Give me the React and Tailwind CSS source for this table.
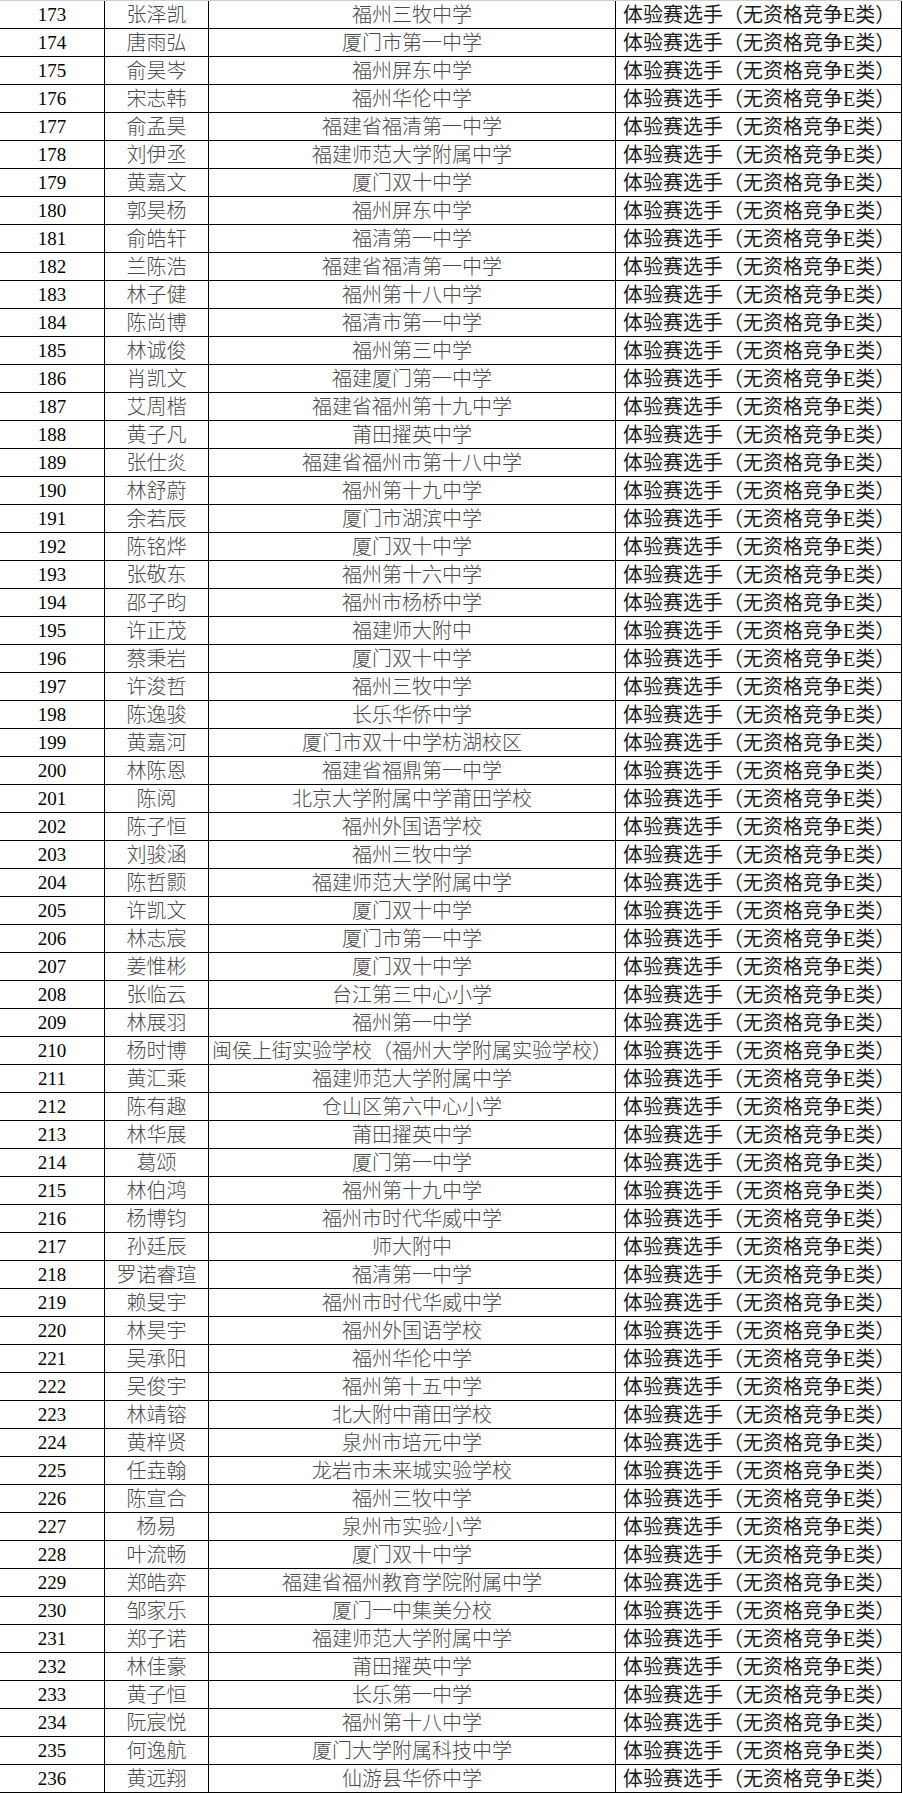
const ROWS = [
  [173, "张泽凯", "福州三牧中学"],
  [174, "唐雨弘", "厦门市第一中学"],
  [175, "俞昊岑", "福州屏东中学"],
  [176, "宋志韩", "福州华伦中学"],
  [177, "俞孟昊", "福建省福清第一中学"],
  [178, "刘伊丞", "福建师范大学附属中学"],
  [179, "黄嘉文", "厦门双十中学"],
  [180, "郭昊杨", "福州屏东中学"],
  [181, "俞皓轩", "福清第一中学"],
  [182, "兰陈浩", "福建省福清第一中学"],
  [183, "林子健", "福州第十八中学"],
  [184, "陈尚博", "福清市第一中学"],
  [185, "林诚俊", "福州第三中学"],
  [186, "肖凯文", "福建厦门第一中学"],
  [187, "艾周楷", "福建省福州第十九中学"],
  [188, "黄子凡", "莆田擢英中学"],
  [189, "张仕炎", "福建省福州市第十八中学"],
  [190, "林舒蔚", "福州第十九中学"],
  [191, "余若辰", "厦门市湖滨中学"],
  [192, "陈铭烨", "厦门双十中学"],
  [193, "张敬东", "福州第十六中学"],
  [194, "邵子昀", "福州市杨桥中学"],
  [195, "许正茂", "福建师大附中"],
  [196, "蔡秉岩", "厦门双十中学"],
  [197, "许浚哲", "福州三牧中学"],
  [198, "陈逸骏", "长乐华侨中学"],
  [199, "黄嘉河", "厦门市双十中学枋湖校区"],
  [200, "林陈恩", "福建省福鼎第一中学"],
  [201, "陈阅", "北京大学附属中学莆田学校"],
  [202, "陈子恒", "福州外国语学校"],
  [203, "刘骏涵", "福州三牧中学"],
  [204, "陈哲颢", "福建师范大学附属中学"],
  [205, "许凯文", "厦门双十中学"],
  [206, "林志宸", "厦门市第一中学"],
  [207, "姜惟彬", "厦门双十中学"],
  [208, "张临云", "台江第三中心小学"],
  [209, "林展羽", "福州第一中学"],
  [210, "杨时博", "闽侯上街实验学校（福州大学附属实验学校）"],
  [211, "黄汇乘", "福建师范大学附属中学"],
  [212, "陈有趣", "仓山区第六中心小学"],
  [213, "林华展", "莆田擢英中学"],
  [214, "葛颂", "厦门第一中学"],
  [215, "林伯鸿", "福州第十九中学"],
  [216, "杨博钧", "福州市时代华威中学"],
  [217, "孙廷辰", "师大附中"],
  [218, "罗诺睿瑄", "福清第一中学"],
  [219, "赖旻宇", "福州市时代华威中学"],
  [220, "林昊宇", "福州外国语学校"],
  [221, "吴承阳", "福州华伦中学"],
  [222, "吴俊宇", "福州第十五中学"],
  [223, "林靖镕", "北大附中莆田学校"],
  [224, "黄梓贤", "泉州市培元中学"],
  [225, "任垚翰", "龙岩市未来城实验学校"],
  [226, "陈宣合", "福州三牧中学"],
  [227, "杨易", "泉州市实验小学"],
  [228, "叶流畅", "厦门双十中学"],
  [229, "郑皓弈", "福建省福州教育学院附属中学"],
  [230, "邹家乐", "厦门一中集美分校"],
  [231, "郑子诺", "福建师范大学附属中学"],
  [232, "林佳豪", "莆田擢英中学"],
  [233, "黄子恒", "长乐第一中学"],
  [234, "阮宸悦", "福州第十八中学"],
  [235, "何逸航", "厦门大学附属科技中学"],
  [236, "黄远翔", "仙游县华侨中学"],
];

const STATUS = "体验赛选手（无资格竞争E类）";

export default function App() {
  return (
    <div className="w-[903px] bg-white font-['Liberation_Serif','Noto_Sans_CJK_SC',serif] text-[20px] leading-none">
      <div className="w-[902px] border-t border-[#cfcfcf]">
        {ROWS.map(([no, name, school]) => (
          <div
            key={no}
            className="grid grid-cols-[105px_104px_407px_286px] h-[28px] border-b border-black"
          >
            {/* number */}
            <div className="flex items-center justify-center border-r border-black text-black text-[19px]">
              {no}
            </div>
            {/* name */}
            <div className="flex items-center justify-center border-r border-black text-[#4a4a4a] font-light">
              {name}
            </div>
            {/* school */}
            <div className="flex items-center justify-center border-r border-black text-[#4a4a4a] font-light whitespace-nowrap">
              {school}
            </div>
            {/* status */}
            <div className="flex items-center pl-[7px] border-r border-black text-[#1a1a1a] whitespace-nowrap">
              {STATUS}
            </div>
          </div>
        ))}
      </div>
    </div>
  );
}
